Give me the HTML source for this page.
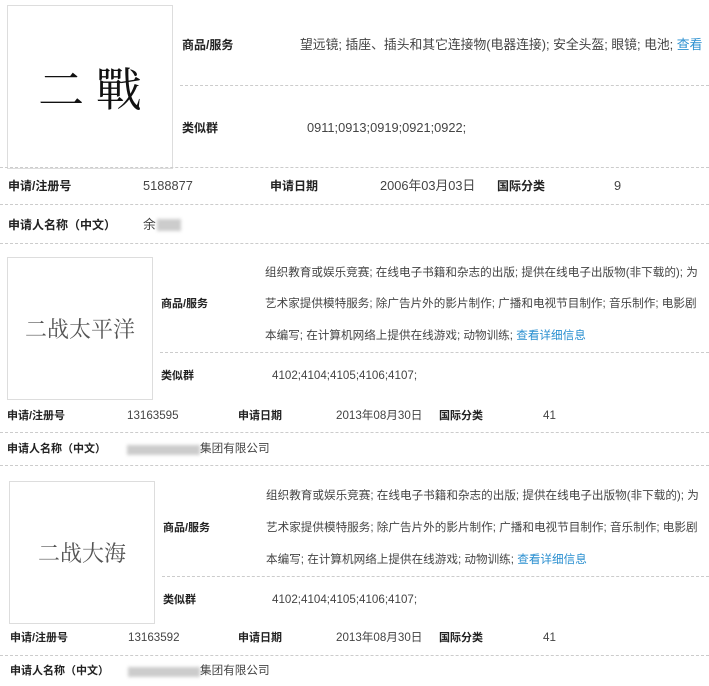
<!DOCTYPE html>
<html><head><meta charset="utf-8"><style>
body{margin:0;width:709px;height:686px;background:#fff;position:relative;overflow:hidden;font-family:"Liberation Sans","Noto Sans CJK SC",sans-serif;color:#444}
.a{position:absolute;white-space:nowrap;line-height:1}
.b{font-weight:bold;color:#222}
.s{font-size:11.6px}
.m{font-size:12.8px}
.b.s{font-size:11px}
.b.m{font-size:12px}
.box{position:absolute;border:1px solid #ddd;background:#fff;display:flex;align-items:center;justify-content:center;color:#333}
.d{position:absolute;height:0;border-top:1px dashed #ccc}
.blue{color:#2a8fd0}
.blur{position:absolute;background:#ccc;height:10px;filter:blur(1.5px)}
</style></head><body>
<div class="box" style="left:7px;top:5px;width:164px;height:162px;font-family:'Noto Serif CJK SC',serif;font-size:46px;color:#111">二&nbsp;戰</div>
<div class="a b m" style="left:182px;top:39px">商品/服务</div>
<div class="a m" style="left:300px;top:39px">望远镜; 插座、插头和其它连接物(电器连接); 安全头盔; 眼镜; 电池; <span class="blue">查看</span></div>
<div class="d" style="left:180px;top:85px;width:529px"></div>
<div class="a b m" style="left:182px;top:122px">类似群</div>
<div class="a m" style="left:307px;top:122px">0911;0913;0919;0921;0922;</div>
<div class="d" style="left:0;top:167px;width:709px"></div>
<div class="a b m" style="left:8px;top:180px">申请/注册号</div>
<div class="a m" style="left:143px;top:180px">5188877</div>
<div class="a b m" style="left:270px;top:180px">申请日期</div>
<div class="a m" style="left:380px;top:180px">2006年03月03日</div>
<div class="a b m" style="left:497px;top:180px">国际分类</div>
<div class="a m" style="left:614px;top:180px">9</div>
<div class="d" style="left:0;top:204px;width:709px"></div>
<div class="a b m" style="left:8px;top:219px">申请人名称（中文）</div>
<div class="a m" style="left:143px;top:219px">余</div>
<div class="blur" style="left:157px;top:219px;width:24px;height:12px"></div>
<div class="d" style="left:0;top:243px;width:709px"></div>

<div class="box" style="left:7px;top:257px;width:144px;height:141px;font-family:'Noto Serif CJK SC',serif;font-size:22px;color:#555">二战太平洋</div>
<div class="a s" style="left:265px;top:267px">组织教育或娱乐竞赛; 在线电子书籍和杂志的出版; 提供在线电子出版物(非下载的); 为</div>
<div class="a b s" style="left:161px;top:299px">商品/服务</div>
<div class="a s" style="left:265px;top:298px">艺术家提供模特服务; 除广告片外的影片制作; 广播和电视节目制作; 音乐制作; 电影剧</div>
<div class="a s" style="left:265px;top:330px">本编写; 在计算机网络上提供在线游戏; 动物训练; <span class="blue">查看详细信息</span></div>
<div class="d" style="left:160px;top:352px;width:549px"></div>
<div class="a b s" style="left:161px;top:371px">类似群</div>
<div class="a s" style="left:272px;top:370px">4102;4104;4105;4106;4107;</div>
<div class="a b s" style="left:7px;top:411px">申请/注册号</div>
<div class="a s" style="left:127px;top:410px">13163595</div>
<div class="a b s" style="left:238px;top:411px">申请日期</div>
<div class="a s" style="left:336px;top:410px">2013年08月30日</div>
<div class="a b s" style="left:439px;top:411px">国际分类</div>
<div class="a s" style="left:543px;top:410px">41</div>
<div class="d" style="left:0;top:432px;width:709px"></div>
<div class="a b s" style="left:7px;top:444px">申请人名称（中文）</div>
<div class="blur" style="left:127px;top:445px;width:73px"></div>
<div class="a s" style="left:200px;top:443px">集团有限公司</div>
<div class="d" style="left:0;top:465px;width:709px"></div>

<div class="box" style="left:9px;top:481px;width:144px;height:141px;font-family:'Noto Serif CJK SC',serif;font-size:22px;color:#555">二战大海</div>
<div class="a s" style="left:266px;top:490px">组织教育或娱乐竞赛; 在线电子书籍和杂志的出版; 提供在线电子出版物(非下载的); 为</div>
<div class="a b s" style="left:163px;top:523px">商品/服务</div>
<div class="a s" style="left:266px;top:522px">艺术家提供模特服务; 除广告片外的影片制作; 广播和电视节目制作; 音乐制作; 电影剧</div>
<div class="a s" style="left:266px;top:554px">本编写; 在计算机网络上提供在线游戏; 动物训练; <span class="blue">查看详细信息</span></div>
<div class="d" style="left:162px;top:576px;width:547px"></div>
<div class="a b s" style="left:163px;top:595px">类似群</div>
<div class="a s" style="left:272px;top:594px">4102;4104;4105;4106;4107;</div>
<div class="a b s" style="left:10px;top:633px">申请/注册号</div>
<div class="a s" style="left:128px;top:632px">13163592</div>
<div class="a b s" style="left:238px;top:633px">申请日期</div>
<div class="a s" style="left:336px;top:632px">2013年08月30日</div>
<div class="a b s" style="left:439px;top:633px">国际分类</div>
<div class="a s" style="left:543px;top:632px">41</div>
<div class="d" style="left:0;top:655px;width:709px"></div>
<div class="a b s" style="left:10px;top:666px">申请人名称（中文）</div>
<div class="blur" style="left:128px;top:667px;width:72px"></div>
<div class="a s" style="left:200px;top:665px">集团有限公司</div>
</body></html>
